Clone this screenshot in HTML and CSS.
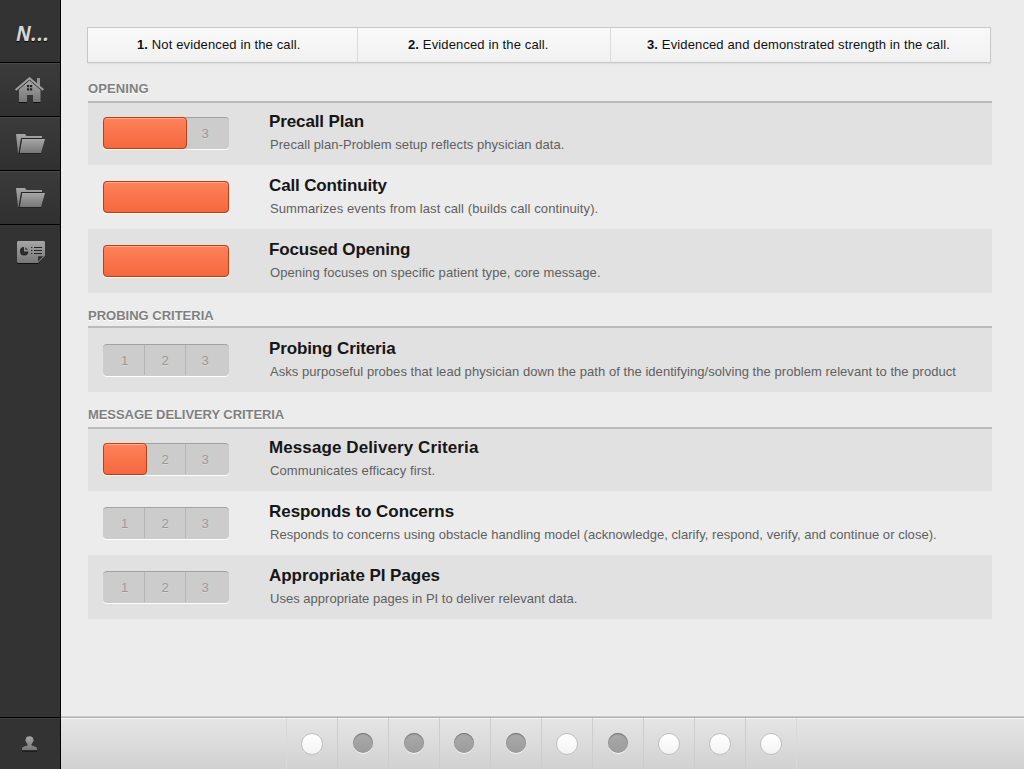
FILE: index.html
```html
<!DOCTYPE html>
<html lang="en">
<head>
<meta charset="utf-8">
<title>Call evaluation</title>
<link rel="stylesheet" href="styles.css">
</head>
<body>
<div class="app">
  <svg class="defs" width="0" height="0" aria-hidden="true">
    <defs>
      <linearGradient id="metal" x1="0" y1="0" x2="0" y2="1"><stop offset="0" stop-color="#a6a6a6"/><stop offset="1" stop-color="#777"/></linearGradient>
      <symbol id="folder" viewBox="0 0 30 22">
        <path d="M1 1h9l1.500 2H27v2H6.500L4 20H3z" fill="url(#metal)"/>
        <path d="M7.200 6H30l-4 14H4.500z" fill="url(#metal)"/>
        <path d="M27 5.500H6.500L4 20.500h22" fill="none" stroke="#222"/>
        <path d="M7.500 6.500H29.500" stroke="#a8a8a8"/>
      </symbol>
    </defs>
  </svg>
  <nav class="sidebar">
    <div class="logo"><span class="logo-text">N...</span></div>
    <a class="nav-item raised"><svg class="icon" width="30" height="28" viewBox="0 0 30 28">
      <path d="M22 1h3v8h-3z" fill="#929292"/>
      <path d="M4 12L14.500 3 25.500 12v13H18v-7h-6v7H4z" fill="url(#metal)"/>
      <path d="M1.500 14.200L14.500 3l13 11.200" fill="none" stroke="#383838" stroke-width="1"/>
      <path d="M.6 13L14.500 1.200 28.400 13" fill="none" stroke="#a0a0a0" stroke-width="2"/>
      <path d="M12 8h2.200v2.300H12zM15 8h2.200v2.300H15zM12 11.200h2.200v2.300H12zM15 11.200h2.200v2.300H15z" fill="#222"/>
      <path d="M4 25.500h8M18 25.500h7.500" stroke="#111"/>
    </svg></a>
    <a class="nav-item raised"><svg class="icon folder" width="30" height="22"><use href="#folder"/></svg></a>
    <a class="nav-item raised"><svg class="icon folder" width="30" height="22"><use href="#folder"/></svg></a>
    <a class="nav-item last"><svg class="icon report" width="28" height="24" viewBox="0 0 28 24">
      <path d="M1 1h26l1 1v13l-7 8H1l-1-1V2z" fill="#111"/>
      <path d="M1 0h26l1 1v14l-7 7H1l-1-1V1z" fill="url(#metal)"/>
      <path d="M7 6v4.500h4.500A4.300 4.300 0 1 1 7 6z" fill="#2b2b2b"/>
      <path d="M8 6.200A4 4 0 0 1 11 9H8z" fill="#555"/>
      <path d="M14 6.500h1.300M17 6.500h8M14 9.500h1.300M17 9.500h8M14 12.500h1.300M17 12.500h8" stroke="#252525"/>
      <path d="M21 15.300h5.300L21 20.600z" fill="#303030"/>
    </svg></a>
    <a class="user"><svg class="icon" width="16" height="17" viewBox="0 0 16 17">
      <path d="M3.700 4.500C3.700 2.200 5.300 1.200 7.500 1.200s3.800 1 3.800 3.300c.7.500.4 1.800-.3 2.100-.3 1.100-.8 2-1.500 2.600v1c2 1.200 5.500 1.300 5.500 3.300v2H0v-2c0-2 3.500-2.100 5.500-3.300v-1C4.800 8.600 4.300 7.700 4 6.600c-.7-.3-1-1.600-.3-2.100z" fill="url(#metal)"/>
      <path d="M0 16h15" stroke="#080808"/>
    </svg></a>
  </nav>
  <main class="main">
    <div class="content">
      <div class="legend">
        <div class="legend-item one"><b>1.</b> Not evidenced in the call.</div>
        <div class="legend-item two"><b>2.</b> Evidenced in the call.</div>
        <div class="legend-item three"><b>3.</b> Evidenced and demonstrated strength in the call.</div>
      </div>

      <h2 class="heading opening">OPENING</h2>
      <section class="rows">
        <article class="row shaded first plan">
          <div class="rating"><span>1</span><span>2</span><span>3</span><i class="fill two-thirds"></i></div>
          <div class="text"><h3>Precall Plan</h3><p>Precall plan-Problem setup reflects physician data.</p></div>
        </article>
        <article class="row continuity">
          <div class="rating"><span>1</span><span>2</span><span>3</span><i class="fill full"></i></div>
          <div class="text"><h3>Call Continuity</h3><p>Summarizes events from last call (builds call continuity).</p></div>
        </article>
        <article class="row shaded focused">
          <div class="rating"><span>1</span><span>2</span><span>3</span><i class="fill full"></i></div>
          <div class="text"><h3>Focused Opening</h3><p>Opening focuses on specific patient type, core message.</p></div>
        </article>
      </section>

      <h2 class="heading probing">PROBING CRITERIA</h2>
      <section class="rows">
        <article class="row shaded probes">
          <div class="rating"><span>1</span><span>2</span><span>3</span></div>
          <div class="text"><h3>Probing Criteria</h3><p>Asks purposeful probes that lead physician down the path of the identifying/solving the problem relevant to the product</p></div>
        </article>
      </section>

      <h2 class="heading delivery">MESSAGE DELIVERY CRITERIA</h2>
      <section class="rows">
        <article class="row shaded first message">
          <div class="rating"><span>1</span><span>2</span><span>3</span><i class="fill third"></i></div>
          <div class="text"><h3>Message Delivery Criteria</h3><p>Communicates efficacy first.</p></div>
        </article>
        <article class="row concerns">
          <div class="rating"><span>1</span><span>2</span><span>3</span></div>
          <div class="text"><h3>Responds to Concerns</h3><p>Responds to concerns using obstacle handling model (acknowledge, clarify, respond, verify, and continue or close).</p></div>
        </article>
        <article class="row shaded pages">
          <div class="rating"><span>1</span><span>2</span><span>3</span></div>
          <div class="text"><h3>Appropriate PI Pages</h3><p>Uses appropriate pages in PI to deliver relevant data.</p></div>
        </article>
      </section>
    </div>
    <footer class="pager">
      <div class="page"><i class="dot on"></i></div>
      <div class="page"><i class="dot"></i></div>
      <div class="page"><i class="dot"></i></div>
      <div class="page snug"><i class="dot"></i></div>
      <div class="page"><i class="dot"></i></div>
      <div class="page snug"><i class="dot on"></i></div>
      <div class="page"><i class="dot"></i></div>
      <div class="page snug"><i class="dot on"></i></div>
      <div class="page snug"><i class="dot on"></i></div>
      <div class="page snug"><i class="dot on"></i></div>
    </footer>
  </main>
</div>
</body>
</html>
```
FILE: styles.css
```css
* { box-sizing: border-box; }
body { margin: 0; background: #ececec; font-family: "Liberation Sans", Arial, sans-serif; color: #161616; }
h2, h3, p { margin: 0; }
.app { display: flex; width: 1024px; height: 769px; overflow: hidden; }
.defs { position: absolute; }
.icon { display: block; }

.sidebar { display: flex; flex-direction: column; width: 61px; flex: none; background: #333; border-right: 1px solid #000; }
.logo { height: 63px; border-bottom: 1px solid #000; padding: 18px 0 0 16px; font: italic bold 22px/28px "Noto Sans", sans-serif; color: #d5d5d5; text-shadow: 0 1px 1px #000; }
.logo-text { display: inline-block; letter-spacing: .4px; transform: scaleX(.9); transform-origin: left; }
.nav-item { display: flex; justify-content: center; height: 54px; padding-top: 13px; border-bottom: 1px solid #000; }
.raised { background: linear-gradient(#3b3b3b, #303030); border-top: 1px solid #474747; }
.nav-item .folder { margin: 2px 0 0 0; }
.nav-item.last { border: 0; padding: 16px 0 0 2px; }
.user { display: flex; justify-content: center; height: 52px; margin-top: auto; padding-top: 17px; border-top: 1px solid #000; box-shadow: inset 0 1px #3d3d3d; }

.main { flex: 1; display: flex; flex-direction: column; min-width: 0; }
.content { flex: 1; padding: 27px 32px 0 27px; }
.legend { display: flex; width: 904px; height: 36px; margin-left: -1px; border: 1px solid #c8c8c8; background: linear-gradient(#f9f9f9, #f1f1f1); box-shadow: 0 1px 1px #dedede; }
.legend-item { font-size: 13px; line-height: 34px; white-space: nowrap; color: #111; letter-spacing: .13px; }
.one { width: 270px; padding-left: 49px; border-right: 1px solid #dadada; }
.two { width: 253px; padding-left: 50px; border-right: 1px solid #dadada; }
.three { padding-left: 36px; }

.heading { font-size: 13px; line-height: 16px; color: #808080; text-shadow: 0 1px #fff; border-bottom: 2px solid #bbb; white-space: nowrap; }
.opening { margin-top: 18px; height: 22px; letter-spacing: .12px; }
.probing { margin-top: 15px; height: 20px; }
.delivery { margin-top: 15px; height: 22px; letter-spacing: -.07px; }
.row { display: flex; height: 64px; padding: 16px 0 0 15px; }
.shaded { background: #e1e1e1; }
.row.first { height: 62px; padding-top: 14px; }
.rating { position: relative; display: grid; grid-template-columns: 42px 41px 43px; flex: none; width: 126px; height: 32px; border-radius: 4px; background: #ccc; border-top: 1px solid #a2a2a2; box-shadow: 0 1px #fff; }
.rating span { height: 30px; font-size: 13px; line-height: 32px; text-align: center; color: #999; border-right: 1px solid #b5b5b5; text-shadow: 0 1px #d8d8d8; }
.rating span:nth-child(3) { border: 0; padding-right: 5px; }
.rating span:nth-child(1) { padding-left: 2px; }
.fill { position: absolute; left: 0; top: -1px; height: 32px; border: 1px solid #c93a0d; border-radius: 4px; background: linear-gradient(#ff815a, #f4683f); box-shadow: inset 0 1px #ffac90; }
.third { width: 44px; }
.two-thirds { width: 84px; }
.full { width: 126px; }
.text { margin: -5px 0 0 40px; white-space: nowrap; }
h3 { font-size: 17px; line-height: 20px; color: #161616; }
p { padding: 5px 0 0 1px; font-size: 13px; line-height: 16px; color: #606060; }
.plan h3 { letter-spacing: -.12px; }
.plan p { letter-spacing: .05px; }
.continuity h3 { letter-spacing: -.14px; }
.continuity p { letter-spacing: .105px; }
.focused h3 { letter-spacing: -.16px; }
.focused p { letter-spacing: .085px; }
.probes h3 { letter-spacing: -.12px; }
.probes p { letter-spacing: .05px; }
.message h3 { letter-spacing: .1px; }
.message p { letter-spacing: .1px; }
.concerns h3, .pages h3 { letter-spacing: -.05px; }
.concerns p { letter-spacing: .04px; }
.pages p { letter-spacing: .02px; }

.pager { display: flex; height: 53px; padding: 2px 0 0 225px; background: linear-gradient(#c9c9c9 0 1px, #b4b4b4 1px 2px, #f4f4f4 2px 3px, #e5e5e5 3px, #d1d1d1); }
.page { width: 51px; padding: 15px 0 0 15px; border-left: 1px solid #cdcdcd; }
.page:first-child { border-left-color: #d9d9d9; padding-left: 14px; }
.page:last-child { width: 52px; border-right: 1px solid #d9d9d9; }
.page.snug { padding-left: 14px; }
.dot { display: block; width: 20px; height: 20px; border-radius: 50%; background: linear-gradient(#aaa, #9b9b9b); box-shadow: inset 0 1px 1px #707070, 0 1px #f8f8f8; }
.dot.on { width: 22px; height: 22px; border: 1px solid #c1c1c1; background: linear-gradient(#fff, #f3f3f3); box-shadow: none; }
```
